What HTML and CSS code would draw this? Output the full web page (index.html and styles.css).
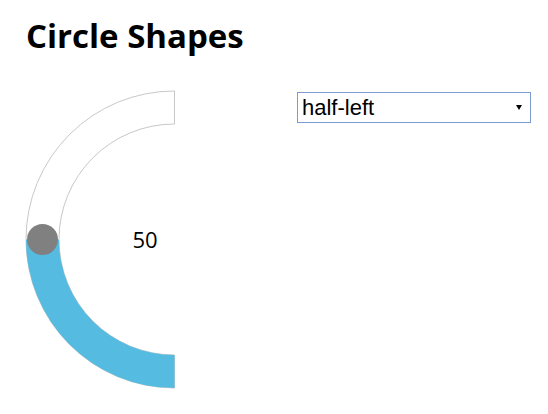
FILE: index.html
```html
<!DOCTYPE html>
<html lang="en">
<head>
    <meta charset="UTF-8">
    <meta name="viewport" content="width=device-width, initial-scale=1.0">
    <title>Circle Shapes</title>
    <link rel="stylesheet" href="styles.css">
</head>
<body>

    <h1 class="main-heading">Circle Shapes</h1>

    <div class="demo">
        <svg class="gauge" width="160" height="302" viewBox="0 0 160 302">
            <!-- track: half circle on the left -->
            <path class="track" d="M154.5 2 A148.5 148.5 0 0 0 154.5 299 L154.5 266 A115.5 115.5 0 0 1 154.5 35 Z" />
            <!-- filled value -->
            <path class="fill" d="M6 150.5 A148.5 148.5 0 0 0 154.5 299 L154.5 266 A115.5 115.5 0 0 1 39 150.5 Z" />
            <circle class="thumb" cx="22.5" cy="150.5" r="15.5" />
            <text class="value" x="125" y="159" text-anchor="middle">50</text>
        </svg>

        <div class="select-wrap">
            <select class="shape-select">
                <option>half-left</option>
                <option>half-right</option>
                <option>half-top</option>
                <option>half-bottom</option>
                <option>full</option>
            </select>
        </div>
    </div>

</body>
</html>
```

FILE: styles.css
```css
body {
    font-family: "Open Sans", sans-serif;
    margin: 0;
    padding: 0;
    background-color: white;
    color: black;
}

.main-heading {
    margin: 0;
    padding: 14px 0 0 26px;
    font-size: 33px;
    font-weight: bold;
    line-height: 44px;
}

.demo {
    display: flex;
    align-items: flex-start;
    padding-left: 20px;
    margin-top: 31px;
}

.gauge {
    display: block;
}

.track {
    fill: white;
    stroke: #c8c8c8;
    stroke-width: 1;
}

.fill {
    fill: #55bbe0;
}

.thumb {
    fill: #808080;
}

.value {
    font-family: "Open Sans", sans-serif;
    font-size: 22px;
    fill: black;
}

.select-wrap {
    position: relative;
    margin-left: 117px;
    margin-top: 3px;
}

.shape-select {
    appearance: none;
    width: 234px;
    height: 31px;
    padding: 0 20px 0 4px;
    border: 1px solid #7a9cd3;
    border-radius: 0;
    background-color: white;
    font-family: "Liberation Sans", Arial, sans-serif;
    font-size: 22px;
    color: black;
}

/* small solid arrow like the old native dropdown */
.select-wrap::after {
    content: "";
    position: absolute;
    right: 9px;
    top: 13px;
    border-left: 3px solid transparent;
    border-right: 3px solid transparent;
    border-top: 5px solid black;
    pointer-events: none;
}
```
